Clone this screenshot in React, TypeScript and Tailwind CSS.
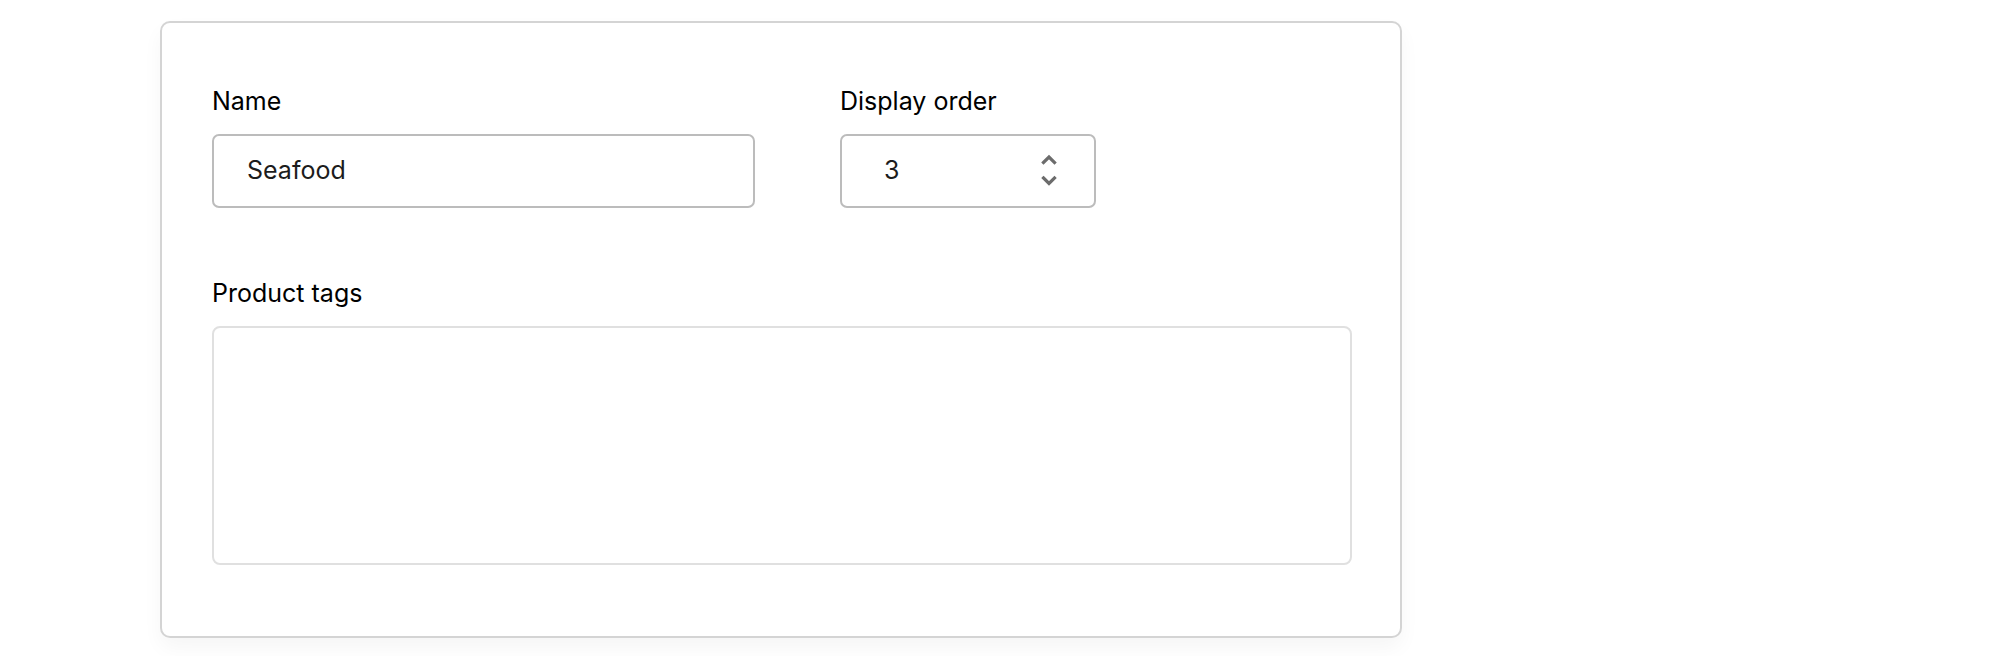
import { FC } from 'react';

const font = { fontFamily: 'Inter, "Noto Sans", sans-serif' };

const Label: FC<{ text: string }> = ({ text }) => (
  <div className="text-[25px] leading-[32px] font-normal text-black mb-[17px]">{text}</div>
);

const Spinner: FC = () => (
  <svg width="18" height="34" viewBox="0 0 18 34" fill="none" stroke="#6c6c6c" strokeWidth="3.2" strokeLinecap="square" strokeLinejoin="miter">
    <path d="M3.5 8.5 L9 3 L14.5 8.5" />
    <path d="M3.5 24 L9 29.5 L14.5 24" />
  </svg>
);

export default function App() {
  return (
    <div className="min-h-[656px] bg-white pl-[160px] pt-[21px]" style={font}>
      <div className="w-[1242px] rounded-[10px] border-2 border-[#d4d4d4] bg-white shadow-[0_10px_20px_rgba(0,0,0,0.04)] pl-[50px] pr-[48px] pt-[62px] pb-[71px]">
        <div className="flex gap-[85px]">
          <div className="flex flex-col">
            <Label text="Name" />
            <div className="w-[543px] h-[74px] rounded-[7px] border-2 border-[#bcbcbc] flex items-center pl-[33px] text-[25px] font-normal text-[#1c1c1c]">
              Seafood
            </div>
          </div>
          <div className="flex flex-col">
            <Label text="Display order" />
            <div className="w-[256px] h-[74px] rounded-[7px] border-2 border-[#bcbcbc] flex items-center justify-between pl-[42px] pr-[36px] text-[25px] font-normal text-[#1c1c1c]">
              <span>3</span>
              <Spinner />
            </div>
          </div>
        </div>
        <div className="mt-[69px] flex flex-col">
          <Label text="Product tags" />
          <div className="w-[1140px] h-[239px] rounded-[8px] border-2 border-[#e0e0e0]" />
        </div>
      </div>
    </div>
  );
}
